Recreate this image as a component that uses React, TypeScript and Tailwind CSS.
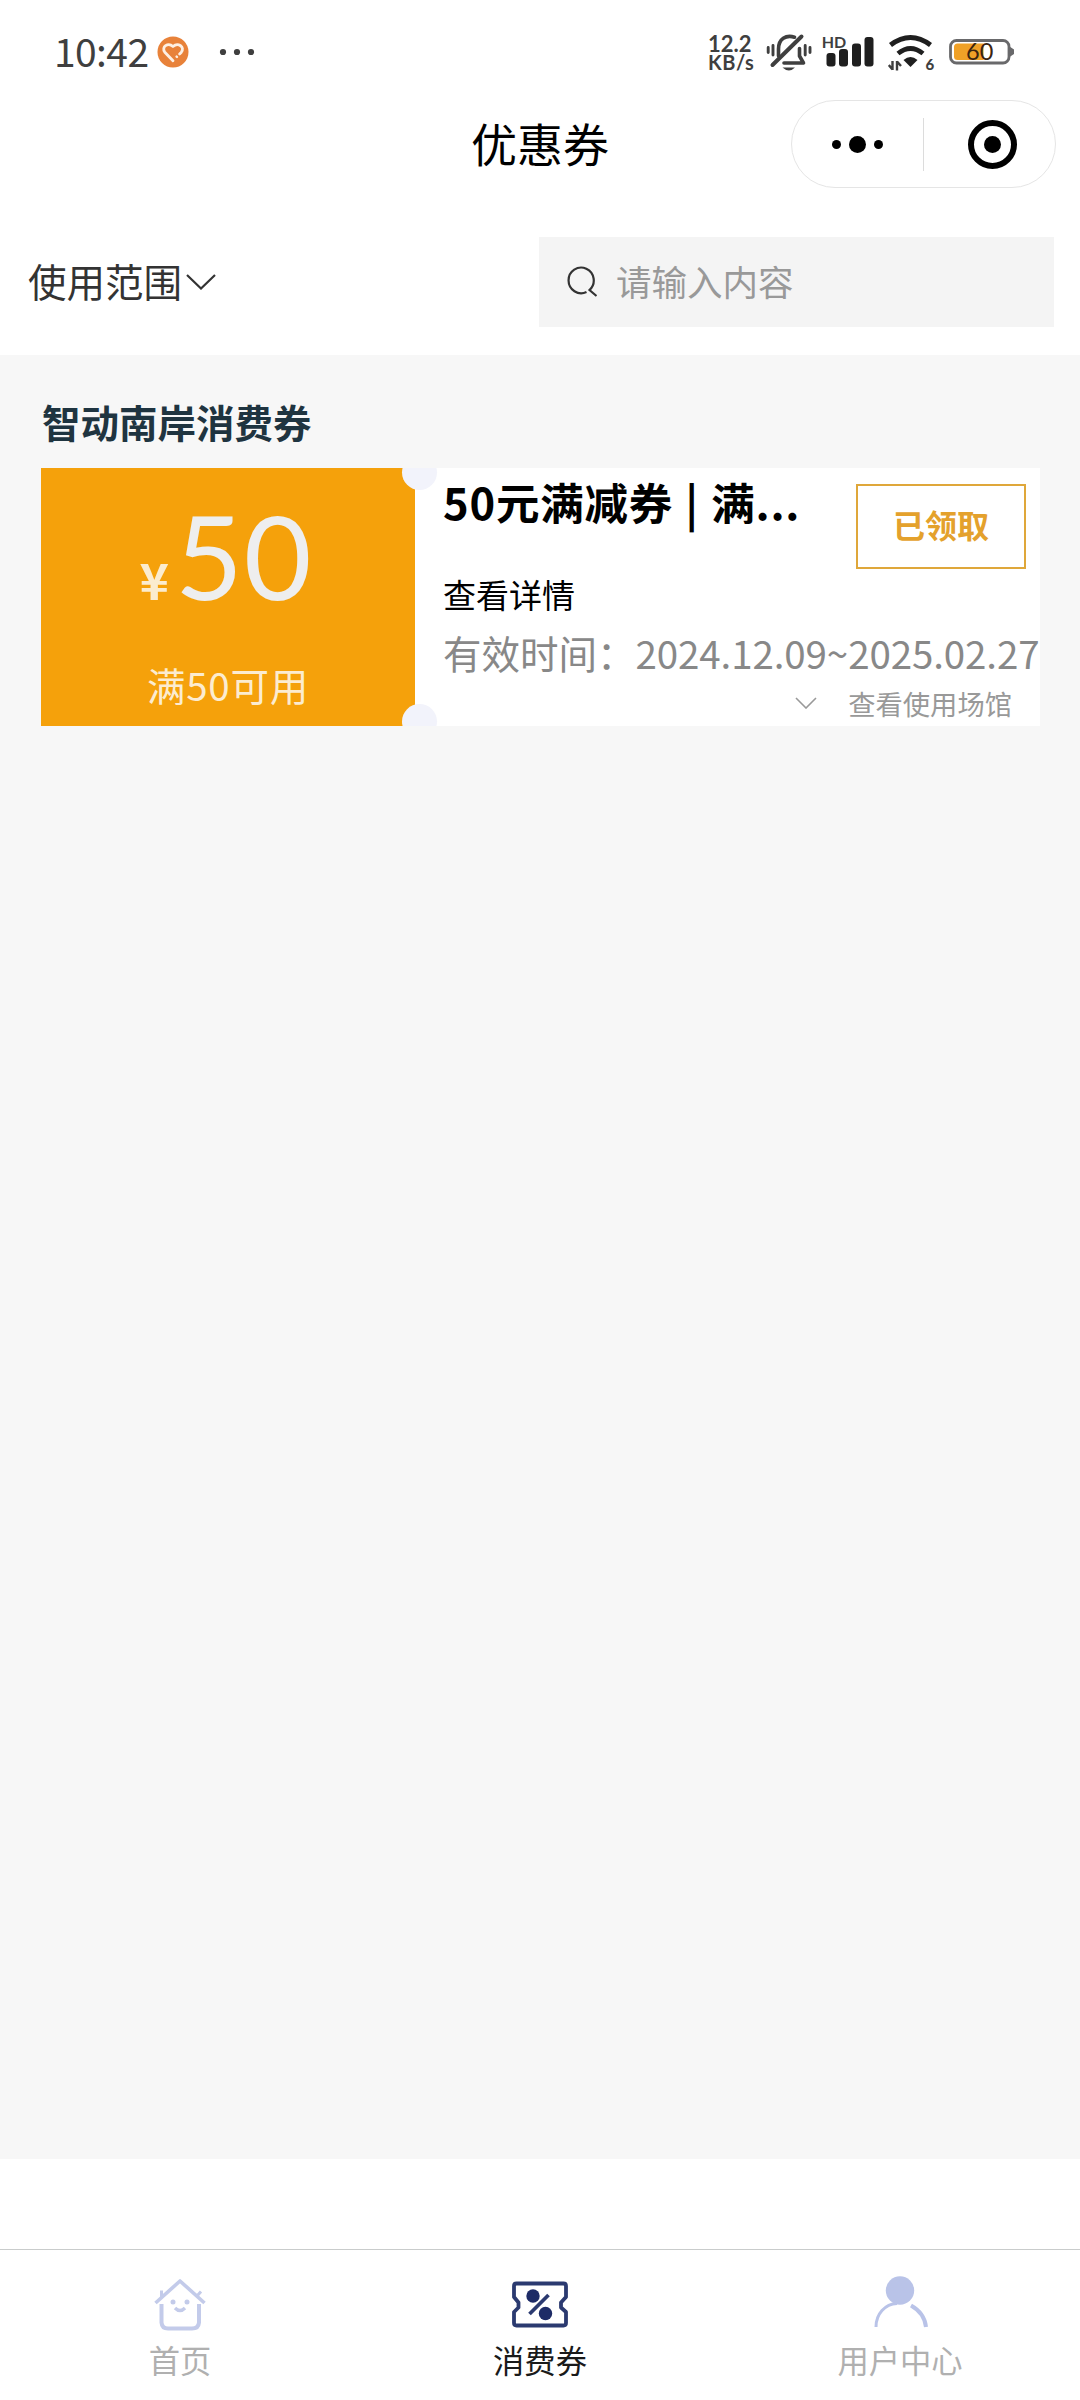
import type { ReactNode } from 'react'

function StatusBar() {
  return (
    <div className="flex h-[100px] items-start pl-[54px] pt-[28px] text-[#3f3f3f]">
      <span className="w-[97px] whitespace-nowrap text-[39px] leading-[44px] tracking-[-0.6px]">10:42</span>
      <svg className="ml-[6px] mt-[8px] h-8 w-8" viewBox="0 0 32 32" fill="none">
        <circle cx="16" cy="16" r="15.5" fill="#e8823a" />
        <path
          d="M16 24.800 7.800 16.200C4 11 11 6 16 10.500C21 6 28.500 11 24.200 16.400L22.600 18"
          stroke="#fdf0e4"
          strokeWidth="2.800"
          strokeLinecap="round"
          strokeLinejoin="round"
        />
        <path d="M19.600 20.600l.4.4" stroke="#fdf0e4" strokeWidth="2.400" strokeLinecap="round" />
      </svg>
      <svg className="ml-[30px] mt-[20px] h-2 w-9" viewBox="0 0 36 8" fill="#3f3f3f">
        <circle cx="4" cy="4" r="3.100" />
        <circle cx="18" cy="4" r="3.100" />
        <circle cx="32" cy="4" r="3.100" />
      </svg>

      <div className="ml-[453px] mt-[6px] w-[54px] whitespace-nowrap font-['Lato','Noto_Sans_CJK_SC',sans-serif] text-[22px] font-bold leading-[19px]">
        <p>12.2</p>
        <p className="text-[20px] tracking-[0.5px]">KB/s</p>
      </div>

      {/* muted bell */}
      <svg className="ml-[4px] mt-[5px] h-10 w-[46px]" viewBox="0 0 46 40" fill="none" stroke="#3f3f3f" strokeWidth="3.600" strokeLinecap="round">
        <path d="M12.500 23V16C12.500 6 20 1.500 28.500 4.200" />
        <path d="M35.500 3.500 6.500 32" strokeWidth="4" />
        <path d="M33.500 15.500V23L37.500 30H18" strokeLinejoin="round" />
        <path d="M16.500 34.500H29Q23 40.500 16.500 34.500Z" fill="#3f3f3f" stroke="none" />
        <path d="M2.200 14.500v5M7 12.500v9.500M39.200 12.500v9.500M44 14.500v5" strokeWidth="2.900" />
      </svg>

      {/* signal */}
      <svg className="ml-[9px] mt-[5px] h-10 w-[54px]" viewBox="0 0 54 40" fill="#1f1f1f">
        <rect x="5.500" y="20" width="9" height="13.500" rx="3" />
        <rect x="18" y="16" width="9" height="17.500" rx="3" />
        <rect x="31" y="10.500" width="9" height="23" rx="3" />
        <rect x="43.500" y="4" width="9" height="29.500" rx="3" />
        <text x="0.800" y="15" fontSize="16" fontWeight="700" fill="#3f3f3f" fontFamily="Lato, sans-serif">HD</text>
      </svg>

      {/* wifi */}
      <svg className="ml-[13px] mt-[5px] h-10 w-[50px]" viewBox="0 0 50 40" fill="none" stroke="#1f1f1f">
        <path d="M2.500 12Q22.500-3 42.500 12" strokeWidth="5" />
        <path d="M10 20.500Q22.500 10.500 35 20.500" strokeWidth="4.800" />
        <path d="M15.500 27Q22.500 21 29.500 27L22.500 34Z" fill="#1f1f1f" stroke="none" />
        <path d="M4.500 28v9M4.500 36.500 0.800 32M9 37.500V28M9 28.500l4 4.500" stroke="#3f3f3f" strokeWidth="2.400" />
        <text x="37.500" y="37" fontSize="15" fontWeight="900" fill="#3f3f3f" stroke="none" fontFamily="Lato, sans-serif">6</text>
      </svg>

      {/* battery */}
      <svg className="ml-[11px] mt-[9px] h-[30px] w-[66px]" viewBox="0 0 66 30" fill="none">
        <rect x="1.500" y="3.500" width="58.500" height="22.500" rx="6" stroke="#69696b" strokeWidth="2.800" />
        <path d="M60.500 9.500 65 12.500v4.500l-4.500 3Z" fill="#69696b" />
        <path d="M8.500 6.500H34.500V23H8.500Q5 23 5 19.500V10Q5 6.500 8.500 6.500Z" fill="#f0a127" />
        <text x="17" y="23.300" fontSize="23.500" fill="#3b2410" fontFamily="Lato, sans-serif">60</text>
      </svg>
    </div>
  )
}

function NavBar() {
  return (
    <div className="grid h-[88px] grid-cols-[1fr_auto_1fr] items-center px-6">
      <span />
      <h1 className="-mt-[5px] text-[46px] leading-[64px] text-black">优惠券</h1>
      <div className="flex h-[88px] w-[265px] items-center justify-self-end rounded-full border border-[#e5e5e5]">
        <div className="flex flex-1 items-center justify-center gap-2">
          <span className="h-[9px] w-[9px] rounded-full bg-black" />
          <span className="h-[17px] w-[17px] rounded-full bg-black" />
          <span className="h-[9px] w-[9px] rounded-full bg-black" />
        </div>
        <span className="h-[53px] w-px bg-[#dcdcdc]" />
        <div className="flex w-[131px] items-center justify-center pl-[5px]">
          <span className="flex h-[49px] w-[49px] items-center justify-center rounded-full border-[6px] border-black">
            <span className="h-[17px] w-[17px] rounded-full bg-black" />
          </span>
        </div>
      </div>
    </div>
  )
}

function FilterBar() {
  return (
    <div className="flex h-[167px] items-start justify-between pl-7 pr-[26px] pt-[49px]">
      <button className="flex h-[90px] items-center gap-[3px] text-[38.5px] leading-[54px] text-[#333]">
        <span className="-mt-[5px]">使用范围</span>
        <svg className="h-4 w-8" viewBox="0 0 32 16" fill="none" stroke="#333" strokeWidth="2.200">
          <path d="M2 1 16 14.500 30 1" />
        </svg>
      </button>
      <div className="flex h-[90px] w-[515px] items-center bg-[#f4f4f4] pl-7 text-[35.5px] leading-[50px] text-[#999]">
        <svg className="-mt-[2px] mr-[17px] h-8 w-8" viewBox="0 0 32 32" fill="none" stroke="#333" strokeWidth="2.200">
          <path d="M19.500 27A12.600 12.800 0 1 1 22.500 25L29.500 31" />
        </svg>
        <span className="-mt-[2px]">请输入内容</span>
      </div>
    </div>
  )
}

function Coupon() {
  return (
    <div className="relative flex h-[258px] w-[999px] overflow-hidden bg-white">
      <div className="w-[374px] bg-[#f5a10b] text-center">
        <div className="flex h-[146px] items-end justify-center pr-1">
          <span className="mb-[11px] mr-[6px] text-[50px] font-bold leading-[50px] text-[#fbeccf]">¥</span>
          <span className="font-['Lato',sans-serif] text-[117px] leading-[117px] tracking-[1px] text-[#eeeeee]">50</span>
        </div>
        <p className="mt-10 text-[38.5px] leading-[60px] tracking-[0.8px] text-[#fcecd0]">满50可用</p>
      </div>
      <span className="absolute left-[361px] top-[-13px] h-[35px] w-[35px] rounded-full bg-[#f2f3fb]" />
      <span className="absolute bottom-[-13px] left-[361px] h-[35px] w-[35px] rounded-full bg-[#f2f3fb]" />

      <div className="flex-1 whitespace-nowrap pl-[28px]">
        <div className="flex h-[104px] items-start justify-between pr-[14px]">
          <h3 className="mt-[2px] text-[43.5px] font-bold leading-[64px] tracking-[0.8px] text-black [word-spacing:1.5px]">50元满减券 | 满...</h3>
          <button className="mt-4 h-[85px] w-[170px] border-2 border-[#dfa73a] pb-[5px] text-[32px] font-bold leading-[76px] text-[#e4a12c]">
            已领取
          </button>
        </div>
        <p className="text-[33px] leading-[44px] text-black">查看详情</p>
        <p className="mt-2 text-[38.5px] leading-[56px] text-[#888]">
          有效时间：<span className="tracking-[-0.1px]">2024.12.09~2025.02.27</span>
        </p>
        <div className="mt-[3px] flex items-center justify-end pr-[28px] text-[27.3px] leading-[40px] text-[#999]">
          <svg className="mr-[31px] h-3 w-[22px]" viewBox="0 0 22 12" fill="none" stroke="#999" strokeWidth="1.600">
            <path d="M1 1 11 11 21 1" />
          </svg>
          查看使用场馆
        </div>
      </div>
    </div>
  )
}

function HomeIcon() {
  return (
    <svg className="h-[56px] w-[56px]" viewBox="0 0 56 56" fill="none" stroke="#c3cbea" strokeWidth="4" strokeLinejoin="round">
      <path d="M3.500 28 28 6 52.500 28" strokeWidth="3.600" />
      <path d="M9.500 23V15.500M45 21l4-4.500" strokeWidth="3" />
      <path d="M9.500 29V47.500Q10 53.500 16 53.500H40Q46.500 53.500 47 47.500V29" />
      <path d="M23 33Q28 38 33 33" strokeWidth="3.400" />
      <circle cx="21" cy="27" r="2.500" fill="#c3cbea" stroke="none" />
      <circle cx="35" cy="27" r="2.500" fill="#c3cbea" stroke="none" />
    </svg>
  )
}

function TicketIcon() {
  return (
    <svg className="h-[56px] w-[60px]" viewBox="0 0 60 56" fill="none" stroke="#2b3a70" strokeWidth="3.800" strokeLinejoin="round">
      <path d="M6.500 8.500H53.500Q56 8.500 56 11V22L51 27.500V32.500L56 37V48Q56 50.500 53.500 50.500H6.500Q4 50.500 4 48V37L8.500 32.500V27.500L4 22V11Q4 8.500 6.500 8.500Z" />
      <path d="M19.500 39 38.500 20" />
      <circle cx="23" cy="21" r="6.700" fill="#1d2b66" stroke="none" />
      <circle cx="35.500" cy="38.500" r="6.700" fill="#1d2b66" stroke="none" />
    </svg>
  )
}

function UserIcon() {
  return (
    <svg className="h-[56px] w-[56px]" viewBox="0 0 56 56" fill="none" stroke="#b9c3e8">
      <circle cx="28" cy="15.500" r="14.200" fill="#b9c3e8" stroke="none" />
      <path d="M4 52C4 39 13 29 25 28.500" strokeWidth="3" />
      <path d="M39 30.500C48 35.500 53 43 54 52" strokeWidth="4" />
    </svg>
  )
}

function Tab({ icon, label, active }: { icon: ReactNode; label: string; active?: boolean }) {
  return (
    <div className="flex flex-1 flex-col items-center pt-[25px]">
      {icon}
      <span className={active ? 'mt-[7px] text-[31.3px] leading-[44px] text-[#1a1a1a]' : 'mt-[7px] text-[31.3px] leading-[44px] text-[#b0b0b0]'}>
        {label}
      </span>
    </div>
  )
}

export default function App() {
  return (
    <div className="flex h-[2400px] w-[1080px] flex-col overflow-hidden bg-white font-['Noto_Sans_CJK_SC',sans-serif]">
      <StatusBar />
      <NavBar />
      <FilterBar />
      <main className="h-[1804px] bg-[#f7f7f7] pl-[41px] pt-[38px]">
        <h2 className="mb-[19px] pl-px text-[38.5px] font-bold leading-[56px] text-[#1f3440]">智动南岸消费券</h2>
        <Coupon />
      </main>
      <nav className="mt-[90px] flex flex-1 border-t border-[#c9cccc]">
        <Tab icon={<HomeIcon />} label="首页" />
        <Tab icon={<TicketIcon />} label="消费券" active />
        <Tab icon={<UserIcon />} label="用户中心" />
      </nav>
    </div>
  )
}
